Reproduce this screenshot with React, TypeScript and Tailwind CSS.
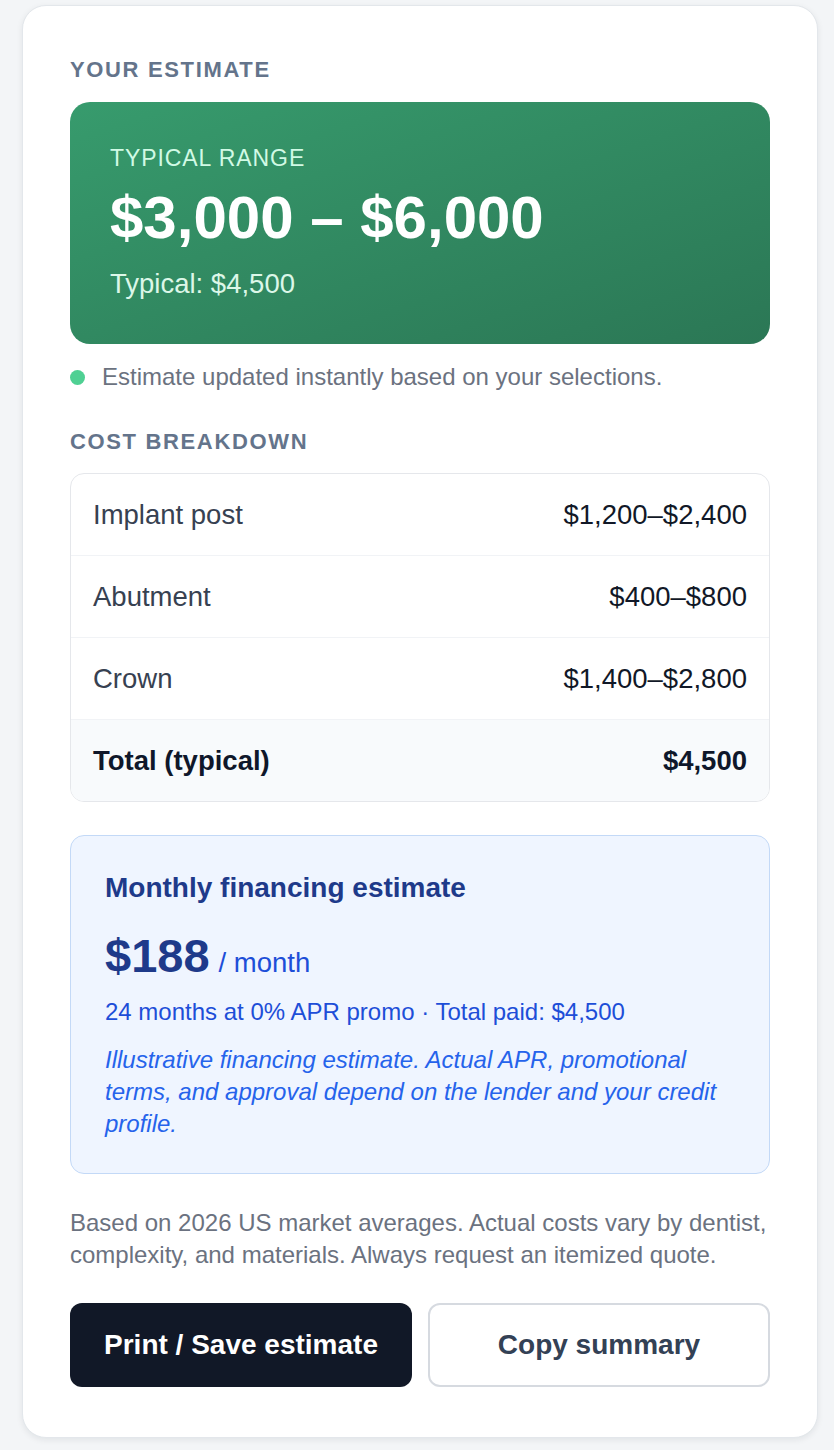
import React from "react";

const rows = [
  { label: "Implant post", value: "$1,200–$2,400" },
  { label: "Abutment", value: "$400–$800" },
  { label: "Crown", value: "$1,400–$2,800" },
];

export default function App() {
  return (
    <div className="min-h-[1450px] bg-[#f3f5f7] pl-[22px] pt-[5px] font-['Liberation_Sans',Arial,sans-serif]">
      <div className="w-[796px] rounded-[24px] border border-[#e3e7eb] bg-white px-[47px] pb-[50px] pt-[47px] shadow-[0_2px_6px_rgba(15,23,42,0.08)]">
        <div className="text-[22px] font-bold uppercase leading-[33px] tracking-[0.075em] text-[#64748b]">
          Your estimate
        </div>

        <div className="mt-4 rounded-[20px] bg-gradient-to-br from-[#379b6d] to-[#2b7755] px-[40px] py-[40px]">
          <div className="text-[23px] uppercase leading-[32px] tracking-[0.04em] text-[#d1fae5]">
            Typical range
          </div>
          <div className="mt-[8px] text-[60px] font-bold leading-[72px] text-white">
            $3,000 – $6,000
          </div>
          <div className="mt-[10px] text-[27.5px] leading-[40px] text-[#dcf7e8]">
            Typical: $4,500
          </div>
        </div>

        <div className="mt-[17px] flex items-center gap-[17px] text-[24px] leading-[32px] text-[#6b7280]">
          <span className="h-[15px] w-[15px] shrink-0 rounded-full bg-[#4fd093]" />
          <span>Estimate updated instantly based on your selections.</span>
        </div>

        <div className="mt-[32px] text-[22px] font-bold uppercase leading-[33px] tracking-[0.075em] text-[#64748b]">
          Cost breakdown
        </div>

        <div className="mt-[15px] overflow-hidden rounded-[14px] border border-[#e5e7eb]">
          {rows.map((r) => (
            <div
              key={r.label}
              className="flex h-[82px] items-center justify-between border-b border-[#f1f3f6] px-[22px] text-[27.5px]"
            >
              <span className="text-[#374151]">{r.label}</span>
              <span className="text-[#111827]">{r.value}</span>
            </div>
          ))}
          <div className="flex h-[81px] items-center justify-between bg-[#f8fafc] px-[22px] text-[27.5px] font-bold text-[#0f172a]">
            <span>Total (typical)</span>
            <span>$4,500</span>
          </div>
        </div>

        <div className="mt-[33px] rounded-[14px] border border-[#c3d9f7] bg-[#eff5ff] px-[34px] pb-[33px] pt-[34px]">
          <div className="text-[28px] font-bold leading-[36px] text-[#1e3a8a]">
            Monthly financing estimate
          </div>
          <div className="mt-[26px] flex items-baseline">
            <span className="text-[47px] font-bold leading-none text-[#1e3a8a]">$188</span>
            <span className="ml-[9px] text-[27.5px] leading-none text-[#1d4ed8]">/ month</span>
          </div>
          <div className="mt-[17px] text-[24px] leading-[32px] text-[#1d4ed8]">
            24 months at 0% APR promo · Total paid: $4,500
          </div>
          <div className="mt-[16px] text-[24px] italic leading-[32px] text-[#2563eb]">
            Illustrative financing estimate. Actual APR, promotional terms, and approval depend on the lender and your credit profile.
          </div>
        </div>

        <div className="mt-[33px] text-[24px] leading-[32px] text-[#6b7280]">
          Based on 2026 US market averages. Actual costs vary by dentist, complexity, and materials. Always request an itemized quote.
        </div>

        <div className="mt-8 grid grid-cols-2 gap-4">
          <button className="h-[84px] rounded-[12px] bg-[#111827] text-[28px] font-bold text-white">
            Print / Save estimate
          </button>
          <button className="h-[84px] rounded-[12px] border-2 border-[#d6dae0] bg-white text-[28px] font-bold text-[#334155]">
            Copy summary
          </button>
        </div>
      </div>
    </div>
  );
}
